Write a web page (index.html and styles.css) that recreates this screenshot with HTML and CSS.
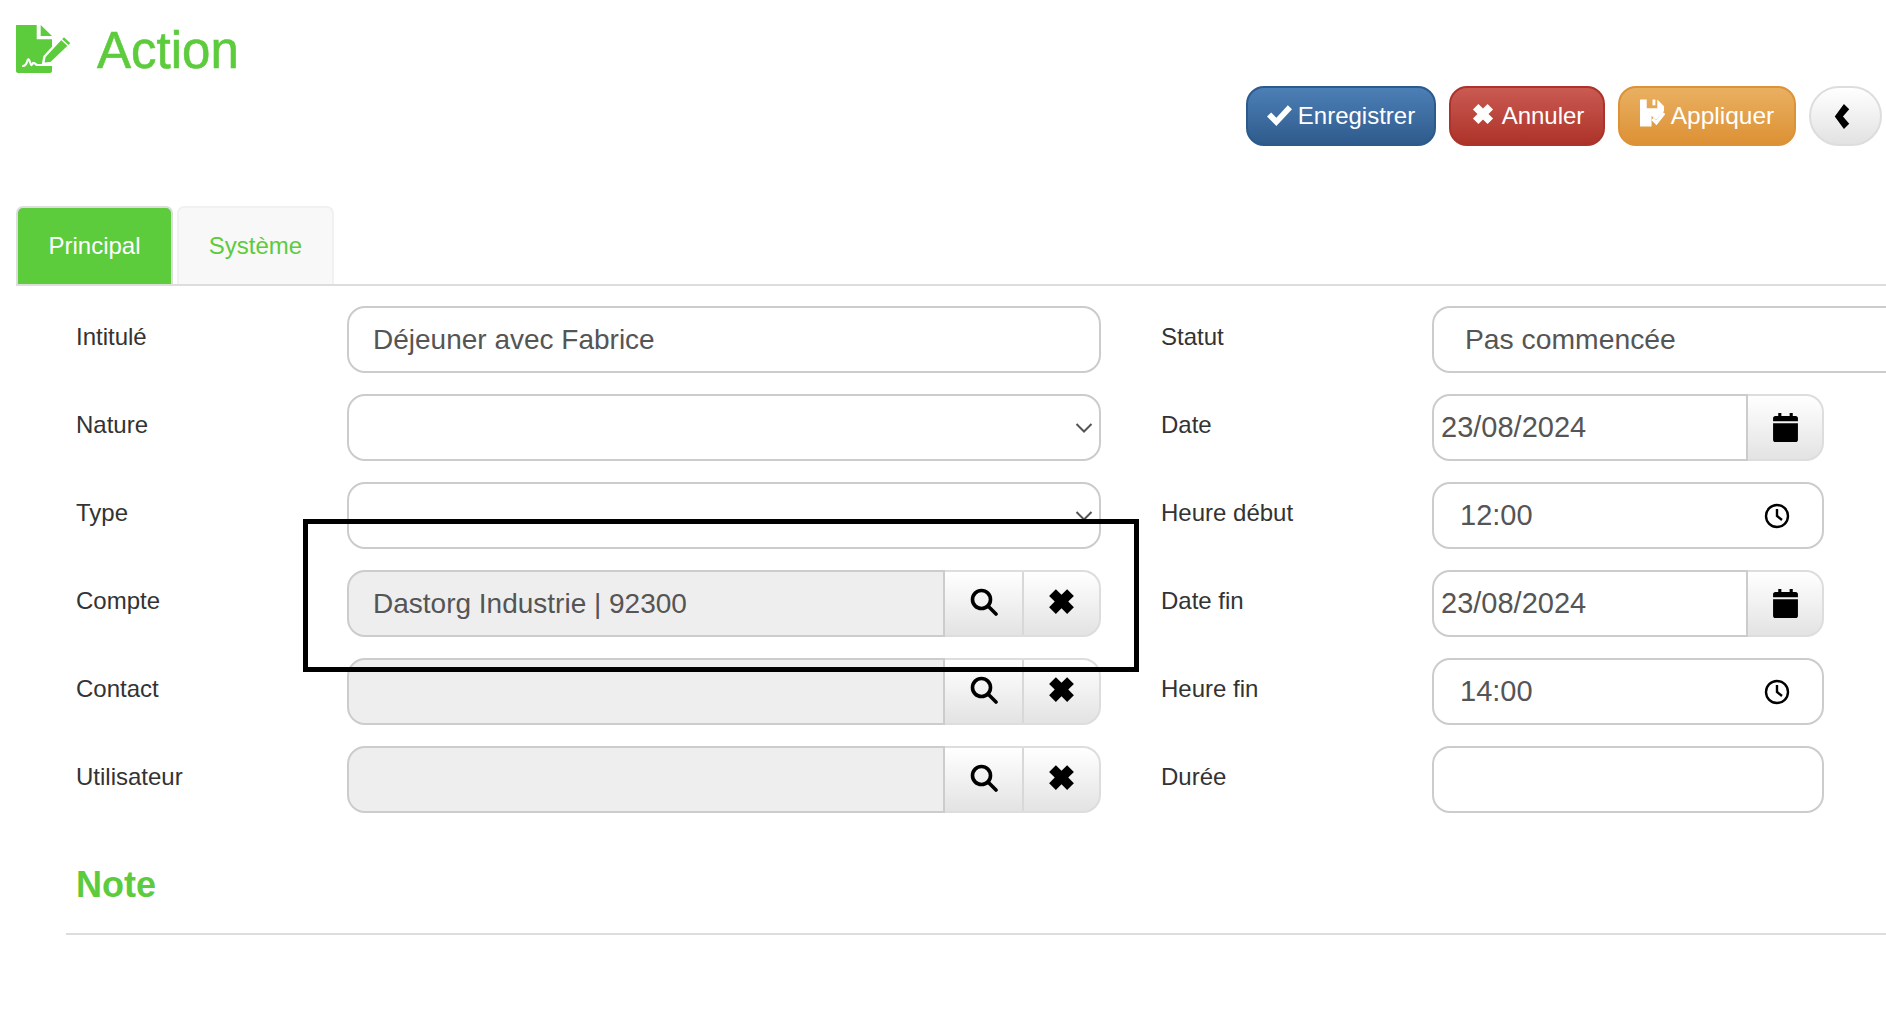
FILE: index.html
```html
<!DOCTYPE html>
<html lang="fr">
<head>
  <meta charset="UTF-8">
  <title>Action</title>
  <link rel="stylesheet" href="styles.css">
</head>
<body>
  <header class="page-header">
    <h1 class="page-title">
      <svg class="title-icon" viewBox="0 0 56 48" aria-hidden="true">
        <path fill="#5ccb3c" d="M1 0H20.7V14.3H36V46C36 47 35 48 34 48H2C1 48 0 47 0 46V1C0 0 0 0 1 0Z"/>
        <path fill="#5ccb3c" d="M24.7 0 36 11H24.7Z"/>
        <path fill="none" stroke="#fff" stroke-width="2.2" stroke-linecap="round" stroke-linejoin="round" d="M7 41C9 41 10 40 11 37 12 33 13 34 14 37 15 41 16 41 17 38 18 37 19 39 21 40H36"/>
        <path fill="#5ccb3c" stroke="#fff" stroke-width="2.4" stroke-linejoin="round" d="M27 39 28.5 31.500 48 10.500 56 18 35 38Z"/>
        <path fill="none" stroke="#fff" stroke-width="1.400" d="M45 14 52 20.500"/>
      </svg>
      Action
    </h1>
    <div class="toolbar">
      <button class="btn btn-blue" type="button">
        <svg class="btn-icon" viewBox="0 0 24 24"><path fill="#fff" d="M0 14 4 10 9 15 20 3 24 7 9 23Z"/></svg>
        Enregistrer
      </button>
      <button class="btn btn-red" type="button">
        <svg class="btn-icon btn-icon-small" viewBox="0 0 24 24"><path fill="#fff" d="M7 1 12 6 17 1 23 7 18 12 23 17 17 23 12 18 7 23 1 17 6 12 1 7Z"/></svg>
        Annuler
      </button>
      <button class="btn btn-orange" type="button">
        <svg class="btn-icon btn-icon-save" viewBox="0 0 26 28"><path fill="#fff" fill-rule="evenodd" d="M1 0H18L25 7V12L17 21 12 17V28H1C0 28 0 28 0 27V1C0 0 0 0 1 0ZM7 0H18V9H7Z"/><path fill="#fff" d="M13 0H16V6H13Z"/><path fill="none" stroke="#fff" stroke-width="3.500" d="M13 20 17 24 25 14"/></svg>
        Appliquer
      </button>
      <button class="btn btn-back" type="button" aria-label="Retour">
        <svg class="btn-icon btn-icon-back" viewBox="0 0 16 28"><path d="M10 1 15.500 6.500 9 14 15.500 21.500 10 27 0.500 14Z"/></svg>
      </button>
    </div>
  </header>

  <nav class="tabs">
    <a class="tab tab-active">Principal</a>
    <a class="tab">Système</a>
  </nav>

  <form class="action-form">
    <label class="field-label">Intitulé</label>
    <div class="field"><input class="input" type="text" value="Déjeuner avec Fabrice"></div>
    <label class="field-label">Statut</label>
    <div class="field field-status"><input class="input input-status" type="text" value="Pas commencée"></div>

    <label class="field-label">Nature</label>
    <div class="field">
      <input class="input" type="text">
      <svg class="chevron" viewBox="0 0 18 12"><path d="M1.500 2 9 9.500 16.500 2"/></svg>
    </div>
    <label class="field-label">Date</label>
    <div class="field group">
      <input class="input input-date" type="text" value="23/08/2024">
      <span class="addon addon-last">
        <svg class="addon-cal" viewBox="0 0 24 28"><path d="M5 0H8V3H16V0H19V3H22C23 3 24 4 24 5V8H0V5C0 4 1 3 2 3H5ZM0 10H24V26C24 27 23 28 22 28H2C1 28 0 27 0 26Z"/></svg>
      </span>
    </div>

    <label class="field-label">Type</label>
    <div class="field">
      <input class="input" type="text">
      <svg class="chevron" viewBox="0 0 18 12"><path d="M1.500 2 9 9.500 16.500 2"/></svg>
    </div>
    <label class="field-label">Heure début</label>
    <div class="field">
      <input class="input input-time" type="text" value="12:00">
      <svg class="clock" viewBox="0 0 26 26"><circle cx="13" cy="13" r="11"/><path d="M13 6V13L18 17"/></svg>
    </div>

    <label class="field-label">Compte</label>
    <div class="field group">
      <input class="input input-ro" type="text" value="Dastorg Industrie | 92300" readonly>
      <span class="addon">
        <svg class="addon-search" viewBox="0 0 28 28"><circle cx="11.500" cy="11.500" r="9"/><path d="M18 18 26 26"/></svg>
      </span>
      <span class="addon addon-last addon-split">
        <svg class="addon-x" viewBox="0 0 24 24"><path d="M7 1 12 6 17 1 23 7 18 12 23 17 17 23 12 18 7 23 1 17 6 12 1 7Z"/></svg>
      </span>
    </div>
    <label class="field-label">Date fin</label>
    <div class="field group">
      <input class="input input-date" type="text" value="23/08/2024">
      <span class="addon addon-last">
        <svg class="addon-cal" viewBox="0 0 24 28"><path d="M5 0H8V3H16V0H19V3H22C23 3 24 4 24 5V8H0V5C0 4 1 3 2 3H5ZM0 10H24V26C24 27 23 28 22 28H2C1 28 0 27 0 26Z"/></svg>
      </span>
    </div>

    <label class="field-label">Contact</label>
    <div class="field group">
      <input class="input input-ro" type="text" readonly>
      <span class="addon">
        <svg class="addon-search" viewBox="0 0 28 28"><circle cx="11.500" cy="11.500" r="9"/><path d="M18 18 26 26"/></svg>
      </span>
      <span class="addon addon-last addon-split">
        <svg class="addon-x" viewBox="0 0 24 24"><path d="M7 1 12 6 17 1 23 7 18 12 23 17 17 23 12 18 7 23 1 17 6 12 1 7Z"/></svg>
      </span>
    </div>
    <label class="field-label">Heure fin</label>
    <div class="field">
      <input class="input input-time" type="text" value="14:00">
      <svg class="clock" viewBox="0 0 26 26"><circle cx="13" cy="13" r="11"/><path d="M13 6V13L18 17"/></svg>
    </div>

    <label class="field-label">Utilisateur</label>
    <div class="field group">
      <input class="input input-ro" type="text" readonly>
      <span class="addon">
        <svg class="addon-search" viewBox="0 0 28 28"><circle cx="11.500" cy="11.500" r="9"/><path d="M18 18 26 26"/></svg>
      </span>
      <span class="addon addon-last addon-split">
        <svg class="addon-x" viewBox="0 0 24 24"><path d="M7 1 12 6 17 1 23 7 18 12 23 17 17 23 12 18 7 23 1 17 6 12 1 7Z"/></svg>
      </span>
    </div>
    <label class="field-label">Durée</label>
    <div class="field"><input class="input" type="text"></div>
  </form>

  <section class="note">
    <h2 class="note-title">Note</h2>
  </section>

  <!-- annotation drawn on top of the screenshot -->
  <div class="highlight"></div>
</body>
</html>
```

FILE: styles.css
```css
* {
  box-sizing: border-box;
}

html, body {
  height: 1024px;
  overflow: hidden;
}

body {
  margin: 0;
  position: relative;
  background: #fff;
  color: #333;
  font-family: "Liberation Sans", Arial, sans-serif;
}

.page-header {
  height: 206px;
  display: flex;
  justify-content: space-between;
  padding: 0 4px 0 16px;
}

.page-title {
  display: flex;
  align-items: flex-start;
  gap: 25px;
  margin: 0;
  padding-top: 22px;
  color: #5ccb3c;
  font-size: 51px;
  font-weight: normal;
  line-height: 58px;
  -webkit-text-stroke: 0.6px #5ccb3c;
}

.title-icon {
  width: 56px;
  height: 48px;
  margin-top: 3px;
}

.toolbar {
  display: flex;
  align-items: flex-start;
  gap: 13px;
  padding-top: 86px;
}

.btn {
  height: 60px;
  display: flex;
  align-items: center;
  justify-content: center;
  gap: 6px;
  padding: 0;
  border: 2px solid;
  border-radius: 18px;
  color: #fff;
  font-family: inherit;
  font-size: 24px;
}

.btn-icon {
  width: 25px;
  height: 25px;
  margin-top: -3px;
}

.btn-icon-small {
  width: 22px;
  height: 22px;
  margin: -5px 2px 0 2px;
}

.btn-icon-save {
  width: 25px;
  height: 28px;
  margin-top: -6px;
}

.btn-icon-back {
  width: 16px;
  height: 27px;
  margin: 0 8px 0 0;
}

.btn-blue {
  width: 190px;
  border-color: #2b5a8c;
  background: linear-gradient(#4c7fb6, #2f5b8c);
}

.btn-red {
  width: 156px;
  border-color: #ab332b;
  background: linear-gradient(#ca5a52, #ad3329);
}

.btn-orange {
  width: 178px;
  border-color: #dd9237;
  background: linear-gradient(#e9b061, #dd9135);
  font-size: 24.500px;
}

.btn-back {
  width: 73px;
  border-color: #ddd;
  border-radius: 30px;
  background: linear-gradient(#fff, #e2e2e2);
}

.tabs {
  display: flex;
  gap: 4px;
  height: 80px;
  margin-left: 16px;
  border-bottom: 2px solid #ddd;
}

.tab {
  width: 157px;
  height: 78px;
  display: flex;
  align-items: center;
  justify-content: center;
  border: 2px solid #f1f1f1;
  border-bottom: 0;
  border-radius: 7px 7px 0 0;
  background: #f8f8f8;
  color: #5ccb3c;
  font-size: 24px;
}

.tab-active {
  border-color: #ddd;
  background: #5ccb3c;
  color: #fff;
}

.action-form {
  display: grid;
  grid-template-columns: 271px 754px 331px 392px;
  grid-auto-rows: 67px;
  row-gap: 21px;
  padding: 20px 0 0 76px;
}

.field-label {
  padding-top: 16px;
  font-size: 24px;
  line-height: 30px;
}

.field-label:nth-child(4n + 3) {
  padding-left: 60px;
}

.field {
  position: relative;
  display: flex;
}

.input {
  width: 100%;
  height: 67px;
  padding: 0 24px;
  border: 2px solid #ccc;
  border-radius: 18px;
  background: #fff;
  color: #555;
  font-family: inherit;
  font-size: 28px;
  outline: none;
}

/* runs off the right side of the window */
.field-status {
  width: 454px;
}

.input-status {
  padding-left: 31px;
  border-right: 0;
  border-radius: 18px 0 0 18px;
  font-size: 28.300px;
}

.input-date {
  width: 316px;
  padding-left: 7px;
  border-radius: 18px 0 0 18px;
  font-size: 29px;
}

.input-time {
  padding-left: 26px;
  font-size: 29px;
}

.input-ro {
  flex: 1;
  min-width: 0;
  border-radius: 18px 0 0 18px;
  background: #eee;
}

.addon {
  flex: none;
  width: 77px;
  height: 67px;
  display: flex;
  align-items: center;
  justify-content: center;
  border: 2px solid #ddd;
  border-left: 0;
  border-right: 0;
  background: linear-gradient(#fff, #e3e3e3);
}

.addon-last {
  width: 79px;
  border-right: 2px solid #ddd;
  border-radius: 0 18px 18px 0;
}

.addon-split {
  border-left: 2px solid #d8d8d8;
}

.group .input-date + .addon-last {
  width: 76px;
}

.addon-search {
  width: 28px;
  height: 28px;
  margin-top: -4px;
  fill: none;
  stroke: #000;
  stroke-width: 3.600;
  stroke-linecap: round;
}

.addon-x {
  width: 27px;
  height: 27px;
  margin-top: -4px;
}

.addon-cal {
  width: 25px;
  height: 29px;
  margin-top: -1px;
}

.chevron {
  position: absolute;
  right: 8px;
  top: 28px;
  width: 18px;
  height: 12px;
  fill: none;
  stroke: #555;
  stroke-width: 2;
}

.clock {
  position: absolute;
  right: 34px;
  top: 21px;
  width: 26px;
  height: 26px;
  fill: none;
  stroke: #000;
  stroke-width: 2.400;
}

.note {
  margin: 44px 0 0 66px;
  height: 78px;
  border-bottom: 2px solid #ddd;
}

.note-title {
  margin: 0 0 0 10px;
  color: #5ccb3c;
  font-size: 36px;
  line-height: 56px;
}

.highlight {
  position: absolute;
  left: 303px;
  top: 519px;
  width: 836px;
  height: 153px;
  border: 5px solid #000;
}
```
